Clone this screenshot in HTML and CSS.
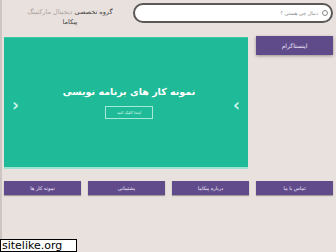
FILE: index.html
```html
<!DOCTYPE html>
<html lang="fa" dir="rtl">

<head>
    <meta charset="UTF-8">
    <meta name="viewport" content="width=device-width, initial-scale=1.0">
    <title>پیکاما</title>
    <link rel="stylesheet" href="styles.css">
</head>

<body>

    <div class="page">
        <div class="header">
            <div class="search">
                <span class="search-icon"></span>
                <span class="search-text">دنبال چی هستی ؟</span>
            </div>
            <div class="brand">گروه تخصصی <span class="muted">دیجیتال مارکتینگ</span><br>پیکاما</div>
        </div>

        <div class="main">
            <div class="side">
                <div class="insta">اینستاگرام</div>
            </div>
            <div class="slider">
                <span class="arrow arrow-right">&#8250;</span>
                <div class="slide">
                    <h2>نمونه کار های برنامه نویسی</h2>
                    <a class="more" href="#">اینجا کلیک کنید</a>
                </div>
                <span class="arrow arrow-left">&#8249;</span>
            </div>
        </div>

        <div class="menu">
            <a href="#">تماس با ما</a>
            <a href="#">درباره پیکاما</a>
            <a href="#">پشتیبانی</a>
            <a href="#">نمونه کار ها</a>
        </div>
    </div>

    <div class="badge" dir="ltr">sitelike.org</div>

</body>

</html>
```

FILE: styles.css
```css
body {
    margin: 0;
    padding: 0;
    font-family: "DejaVu Sans", sans-serif;
    background-color: #e9e1dd;
    height: 252px;
    overflow: hidden;
}

.page {
    border-right: 3px solid #e9e1dd;
    border-left: 2px solid #cdc5c1;
    padding: 3px 0 0 2px;
    height: 249px;
}

.header {
    display: flex;
    align-items: flex-start;
    gap: 13px;
    height: 34px;
}

.search {
    width: 190px;
    height: 16px;
    border: 2px solid #5c5858;
    border-radius: 10px;
    background-color: #fff;
    display: flex;
    align-items: center;
    gap: 4px;
    padding: 0 3px;
}

.search-icon {
    width: 4px;
    height: 4px;
    border: 1px solid #888;
    border-radius: 50%;
}

.search-text {
    font-size: 5px;
    color: #888;
}

.brand {
    width: 100px;
    margin-top: 4px;
    font-size: 6.5px;
    line-height: 10px;
    color: #444;
    text-align: center;
}

.muted {
    color: #aaa4a1;
}

.main {
    display: flex;
    gap: 8px;
    height: 134px;
}

.side {
    width: 77px;
}

.insta {
    height: 19px;
    background-color: #5f4a8a;
    box-shadow: 0 1px 3px rgba(0, 0, 0, 0.35);
    color: #f0e8ff;
    font-size: 6px;
    line-height: 19px;
    text-align: center;
    margin-top: -1px;
}

.slider {
    width: 244px;
    height: 132px;
    background-color: #1fba97;
    border-top: 1px solid #3cc9a6;
    border-bottom: 2px solid #9ee2d0;
    display: flex;
    align-items: center;
    justify-content: space-between;
    padding: 0 8px;
    box-sizing: border-box;
}

.arrow {
    color: #c9f5ea;
    font-size: 17px;
    font-weight: bold;
    margin-top: 4px;
}

.slide {
    display: flex;
    flex-direction: column;
    align-items: center;
    gap: 9px;
    margin-top: 0;
    margin-left: 6px;
}

.slide h2 {
    margin: 0;
    color: #fff;
    font-size: 9.5px;
    font-weight: bold;
}

.more {
    width: 46px;
    height: 11px;
    border: 1px solid #a6e9d8;
    color: #e9fff9;
    font-size: 4px;
    text-decoration: none;
    display: flex;
    align-items: center;
    justify-content: center;
}

.menu {
    display: grid;
    grid-template-columns: repeat(4, 1fr);
    gap: 7px;
    margin-top: 10px;
}

.menu a {
    height: 14px;
    background-color: #614b8b;
    box-shadow: 0 1px 1px rgba(0, 0, 0, 0.3);
    color: #f2ecff;
    font-size: 5px;
    text-decoration: none;
    display: flex;
    align-items: center;
    justify-content: center;
}

.badge {
    position: absolute;
    left: 0;
    bottom: 0;
    width: 74px;
    height: 11px;
    border: 1px solid #000;
    background-color: #fff;
    font-family: "DejaVu Sans", sans-serif;
    font-size: 11px;
    line-height: 12px;
    padding-left: 1px;
    color: #000;
}
```
